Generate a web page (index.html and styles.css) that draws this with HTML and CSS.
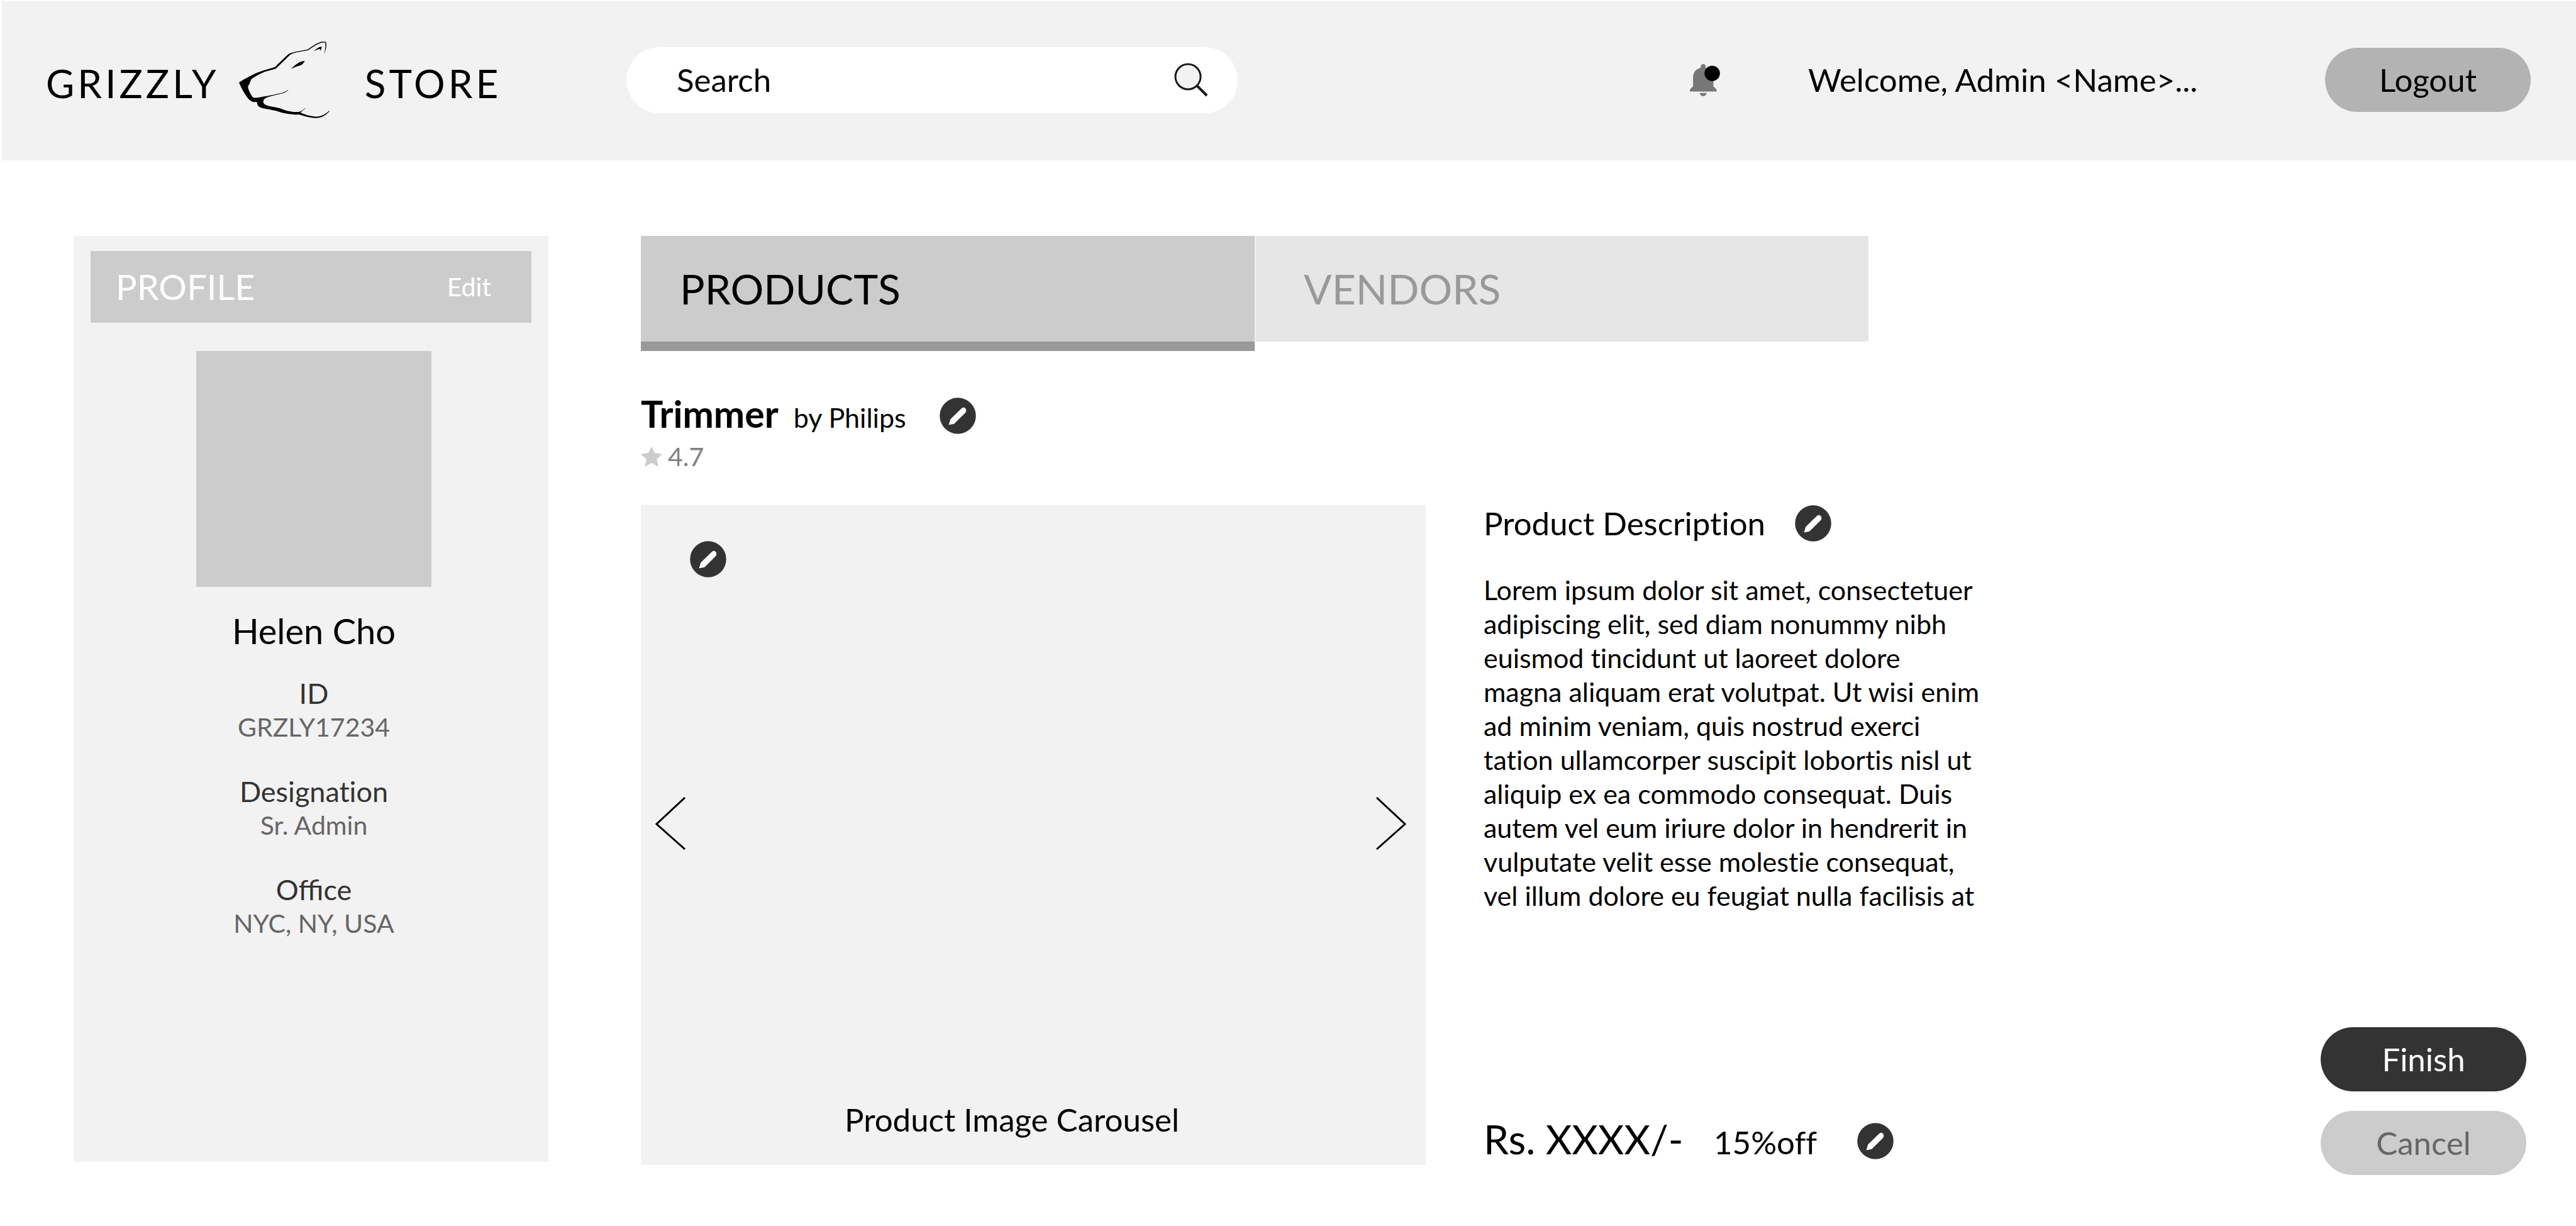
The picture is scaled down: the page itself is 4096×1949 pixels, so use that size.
FILE: index.html
```html
<!DOCTYPE html>
<html lang="en">
<head>
  <meta charset="utf-8">
  <meta name="viewport" content="width=device-width, initial-scale=1">
  <title>Grizzly Store – Edit product</title>
  <link rel="stylesheet" href="styles.css">
</head>
<body>
  <svg class="sprite" aria-hidden="true">
    <symbol id="pencil" viewBox="44 57 240 240">
      <circle cx="164" cy="177" r="119" fill="#333"/>
      <path d="M104 237 L115 200 L187 129 Q200 116 213 127 Q224 140 215 155 L140 230 Z" fill="#fff"/>
      <path d="M116 201 L139 229" stroke="#ccc" stroke-width="1"/>
    </symbol>
  </svg>

  <header class="topbar">
    <a class="logo" href="#">
      <span class="logo-word">GRIZZLY</span>
      <svg class="logo-bear" viewBox="88 70 600 508" aria-hidden="true">
        <path d="M88 341 Q125 317 165 297 Q205 276 250 262 L325 240 L411 157 Q418 151 430 147 Q455 138 480 134 L545 122 Q590 84 635 71 L664 72 Q672 110 655 148 L653 148 Q664 112 659 77 L635 77 Q595 90 548 127 L480 140 Q450 145 427 157 L337 245 Q333 250 325 252 L260 270 Q215 288 175 315 Q165 324 158 350 L147 368 Q152 402 178 438 Q182 443 200 443 Q225 440 245 435 Q275 431 310 424 L380 408 Q398 402 413 391 L415 393 Q400 405 384 411 L310 429 Q285 434 268 443 Q246 455 249 472 Q254 490 290 498 L350 509 Q400 530 450 537 L485 536 Q507 530 527 510 L529 512 Q508 530 496 541 Q540 562 595 568 Q650 566 685 528 L688 530 Q656 573 600 577 Q555 576 485 553 Q430 557 370 541 Q340 529 290 520 Q235 513 218 500 Q207 490 207 471 L180 470 Q160 465 140 437 Q110 395 88 341 Z"/>
        <path d="M432 252 Q455 228 478 214 Q500 199 525 198 L515 212 Q510 223 498 227 Q465 234 432 252 Z"/>
        <path d="M585 134 Q605 109 636 103 L630 132 L625 120 Q605 120 585 134 Z"/>
      </svg>
      <span class="logo-word logo-word-end">STORE</span>
    </a>

    <form class="search" role="search">
      <input class="search-input" type="search" placeholder="Search" aria-label="Search">
      <button class="icon-button" type="button" aria-label="Run search">
        <svg class="search-icon" viewBox="0 0 54 54" aria-hidden="true">
          <circle cx="22" cy="22" r="20" fill="#f2f2f2" stroke="#1a1a1a" stroke-width="3"/>
          <path d="M36 36 L52 52" stroke="#1a1a1a" stroke-width="4"/>
        </svg>
      </button>
    </form>

    <button class="icon-button bell" type="button" aria-label="Notifications">
      <svg class="bell-icon" viewBox="72 68 200 212" aria-hidden="true">
        <path d="M93 215 V150 Q96 106 144 91 V85 a16 17 0 0 1 33 0 V91 Q225 106 228 150 V215 L249 235 V249 H72 V235 Z M137 258 H183 Q180 278 160 279 Q140 278 137 258 Z" fill="#777"/>
        <circle cx="220" cy="129" r="51"/>
      </svg>
    </button>
    <span class="welcome">Welcome, Admin &lt;Name&gt;...</span>
    <button class="pill pill-mid" type="button">Logout</button>
  </header>

  <div class="page">
    <aside class="profile">
      <div class="profile-bar">
        <h2 class="profile-title">PROFILE</h2>
        <a class="profile-edit" href="#">Edit</a>
      </div>
      <div class="profile-body">
        <div class="avatar"></div>
        <p class="profile-name">Helen Cho</p>
        <dl class="facts">
          <div><dt>ID</dt><dd>GRZLY17234</dd></div>
          <div><dt>Designation</dt><dd>Sr. Admin</dd></div>
          <div><dt class="ligatures">Office</dt><dd>NYC, NY, USA</dd></div>
        </dl>
      </div>
    </aside>

    <main class="content">
      <nav class="tabs">
        <button class="tab tab-active" type="button">PRODUCTS</button>
        <button class="tab" type="button">VENDORS</button>
      </nav>

      <div class="title-row">
        <h1 class="title">Trimmer</h1>
        <span class="brand">by Philips</span>
        <button class="icon-button title-edit" type="button" aria-label="Edit name"><svg class="pencil"><use href="#pencil"/></svg></button>
      </div>
      <div class="rating">
        <svg class="star" viewBox="0 0 34 32" aria-hidden="true"><path d="M17 0 L22 10 L34 12 L25 20 L28 32 L17 26 L6 32 L9 20 L0 12 L12 10 Z" fill="#ccc"/></svg>
        <span>4.7</span>
      </div>

      <div class="product">
        <section class="carousel">
          <button class="icon-button carousel-edit" type="button" aria-label="Edit images"><svg class="pencil"><use href="#pencil"/></svg></button>
          <div class="carousel-nav">
            <button class="icon-button" type="button" aria-label="Previous image"><svg class="chevron" viewBox="0 0 48 84"><path d="M47 1 L2 43 L47 83" fill="none" stroke="#000" stroke-width="3"/></svg></button>
            <button class="icon-button" type="button" aria-label="Next image"><svg class="chevron" viewBox="0 0 48 84"><path d="M1 1 L46 43 L1 83" fill="none" stroke="#000" stroke-width="3"/></svg></button>
          </div>
          <p class="carousel-caption">Product Image Carousel</p>
        </section>

        <section class="details">
          <div class="details-head">
            <h2 class="details-title">Product Description</h2>
            <button class="icon-button" type="button" aria-label="Edit description"><svg class="pencil"><use href="#pencil"/></svg></button>
          </div>
          <p class="description">Lorem ipsum dolor sit amet, consectetuer<br>
            adipiscing elit, sed diam nonummy nibh<br>
            euismod tincidunt ut laoreet dolore<br>
            magna aliquam erat volutpat. Ut wisi enim<br>
            ad minim veniam, quis nostrud exerci<br>
            tation ullamcorper suscipit lobortis nisl ut<br>
            aliquip ex ea commodo consequat. Duis<br>
            autem vel eum iriure dolor in hendrerit in<br>
            vulputate velit esse molestie consequat,<br>
            vel illum dolore eu feugiat nulla facilisis at</p>
          <div class="price-row">
            <p class="price">Rs. XXXX/- <span class="discount">15%off</span></p>
            <button class="icon-button" type="button" aria-label="Edit price"><svg class="pencil"><use href="#pencil"/></svg></button>
          </div>
        </section>

        <div class="actions">
          <button class="pill pill-dark" type="button">Finish</button>
          <button class="pill pill-light" type="button">Cancel</button>
        </div>
      </div>
    </main>
  </div>
</body>
</html>
```
FILE: styles.css
```css
* {
  box-sizing: border-box;
}

body {
  margin: 0;
  background: #fff;
  color: #000;
  font: 51px/60px Lato, "Noto Sans", sans-serif;
  font-variant-ligatures: none;
}

h1, h2, p, dl, dd {
  margin: 0;
  font-weight: 400;
}

button, input {
  border: 0;
  font: inherit;
  color: inherit;
}

a {
  color: inherit;
  text-decoration: none;
}

svg {
  display: block;
}

.sprite {
  position: absolute;
  width: 0;
  height: 0;
}

.ligatures {
  font-variant-ligatures: normal;
}

.icon-button {
  padding: 0;
  background: none;
  cursor: pointer;
}

.pencil {
  width: 58px;
  height: 58px;
}

/* Top bar */

.topbar {
  display: grid;
  grid-template-columns: 923px 972fr 719fr 188px 822px 327px;
  align-items: center;
  height: 253px;
  margin: 2px 0 0 3px;
  padding: 0 72px 3px 70px;
  background: #f2f2f2;
}

.logo {
  display: flex;
  align-items: center;
  font-size: 62px;
  letter-spacing: 5px;
}

.logo-word {
  padding-top: 10px;
}

.logo-word-end {
  margin-left: 56px;
}

.logo-bear {
  width: 144px;
  height: 122px;
  margin-left: 31px;
}

.search {
  display: flex;
  align-items: center;
  height: 105px;
  padding: 0 47px 0 80px;
  border-radius: 53px;
  background: #fff;
}

.search-input {
  flex: 1;
  min-width: 0;
  padding: 0;
  background: none;
  outline: 0;
}

.search-input::placeholder {
  color: #000;
  opacity: 1;
}

.search-icon {
  width: 54px;
  height: 54px;
}

.bell {
  grid-column: 4;
  justify-self: start;
}

.bell-icon {
  width: 48px;
  height: 51px;
}

.pill {
  width: 327px;
  height: 102px;
  padding: 0;
  border-radius: 51px;
  cursor: pointer;
}

.pill-mid {
  background: #b3b3b3;
}

.pill-dark {
  background: #333;
  color: #fff;
}

.pill-light {
  background: #ccc;
  color: #666;
}

/* Page columns */

.page {
  display: grid;
  grid-template-columns: 755px 1fr;
  gap: 147px;
  align-items: start;
  padding: 120px 79px 40px 117px;
}

/* Profile card */

.profile {
  min-height: 1472px;
  padding: 24px 27px;
  background: #f2f2f2;
}

.profile-bar {
  display: flex;
  align-items: center;
  justify-content: space-between;
  height: 114px;
  padding: 0 64px 0 40px;
  background: #ccc;
  color: #fff;
}

.profile-title {
  font-size: 56px;
}

.profile-edit {
  font-size: 41px;
}

.profile-body {
  padding: 45px 0 0 9px;
  text-align: center;
}

.avatar {
  width: 374px;
  height: 375px;
  margin: 0 auto;
  background: #ccc;
}

.profile-name {
  margin: 36px 0 38px;
  font-size: 56px;
  line-height: 68px;
}

.facts {
  display: grid;
  gap: 48px;
  line-height: 54px;
}

.facts dt {
  color: #333;
  font-size: 45px;
}

.facts dd {
  color: #666;
  font-size: 41px;
}

/* Tabs */

.tabs {
  display: grid;
  grid-template-columns: 1fr 1fr;
  align-items: start;
  max-width: 1952px;
}

.tab {
  height: 168px;
  padding: 0 76px;
  border-left: 2px solid #f2f2f2;
  background: #e6e6e6;
  color: #999;
  font-size: 66px;
  text-align: left;
  cursor: pointer;
}

.tab-active {
  height: 183px;
  padding: 0 62px;
  border-left: 0;
  border-bottom: 15px solid #999;
  background: #ccc;
  color: #000;
}

/* Product heading */

.title-row {
  display: flex;
  align-items: baseline;
  margin-top: 65px;
  line-height: 70px;
}

.title {
  font-size: 59px;
  font-weight: 700;
}

.brand {
  margin-left: 24px;
  font-size: 43px;
}

.title-edit {
  align-self: center;
  margin-left: 53px;
}

.rating {
  display: flex;
  align-items: center;
  gap: 9px;
  color: #808080;
  font-size: 41px;
  line-height: 54px;
}

.star {
  width: 34px;
  height: 32px;
}

/* Product area */

.product {
  display: grid;
  grid-template-columns: 1248fr 1239fr 327px;
  column-gap: 92px;
  margin-top: 50px;
}

.carousel {
  display: flex;
  flex-direction: column;
  align-self: start;
  min-height: 1049px;
  padding: 57px 31px 42px 23px;
  background: #f2f2f2;
}

.carousel-edit {
  align-self: flex-start;
  margin-left: 55px;
}

.carousel-nav {
  display: flex;
  flex: 1;
  align-items: center;
  justify-content: space-between;
  padding-bottom: 50px;
}

.chevron {
  width: 48px;
  height: 84px;
}

.carousel-caption {
  padding-right: 60px;
  text-align: center;
}

.details {
  display: flex;
  flex-direction: column;
  padding-bottom: 14px;
}

.details-head {
  display: flex;
  align-items: center;
  gap: 47px;
  height: 58px;
}

.details-title {
  font-size: 51px;
}

.description {
  margin-top: 50px;
  font-size: 43px;
  line-height: 54px;
}

.price-row {
  display: flex;
  align-items: center;
  gap: 64px;
  margin-top: auto;
}

.price {
  font-size: 64px;
  line-height: 76px;
}

.discount {
  margin-left: 32px;
  font-size: 51px;
}

.actions {
  display: grid;
  align-self: end;
  gap: 31px;
  padding-top: 830px;
}
```
